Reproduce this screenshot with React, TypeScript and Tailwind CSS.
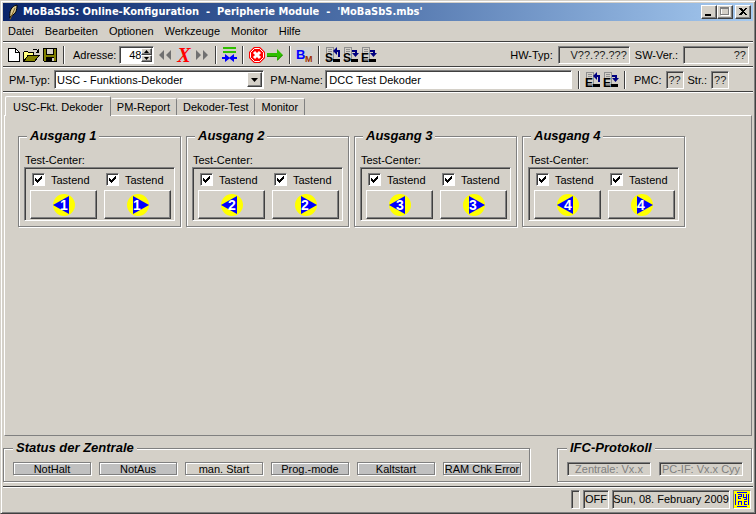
import React, { useState } from 'react';

const outputs = [1, 2, 3, 4];

const fieldInset =
  'border border-t-[#808080] border-l-[#808080] border-r-white border-b-white shadow-[inset_1px_1px_0_#404040]';
const raised =
  'border border-t-white border-l-white border-r-[#404040] border-b-[#404040] shadow-[inset_-1px_-1px_0_#808080]';

function VLine() {
  return <div className="h-[18px] w-[2px] shrink-0 border-l border-r border-l-[#404040] border-r-white" />;
}

function HLine() {
  return <div className="h-[2px] shrink-0 border-t border-b border-t-[#404040] border-b-white" />;
}

interface GroupProps {
  title: string;
  className?: string;
  children: React.ReactNode;
}

function Group({ title, className = '', children }: GroupProps) {
  return (
    <fieldset
      className={`min-w-0 border border-[#808080] shadow-[1px_1px_0_#fff,inset_1px_1px_0_#fff] ${className}`}
    >
      <legend className="bg-[#d4d0c8] px-[3px] text-[13px] leading-[16px] font-bold italic">{title}</legend>
      {children}
    </fieldset>
  );
}

// Toolbar icons
function NewIcon() {
  return (
    <svg width="12" height="14" viewBox="0 0 12 14" shapeRendering="crispEdges">
      <path d="M.5 .5h7l4 4v9h-11z" fill="#fff" stroke="#000" />
      <path d="M7.5 .5v4h4" fill="none" stroke="#000" />
    </svg>
  );
}

function OpenIcon() {
  return (
    <svg width="17" height="14" viewBox="0 0 17 14" shapeRendering="crispEdges">
      <path d="M.5 12.500v-8l1-1h3l1 1h5v3h-5z" fill="#ffff80" stroke="#000" />
      <path d="M1 13l4-5.500h11l-4 5.500z" fill="#808000" stroke="#000" />
      <path d="M9.500 2.500l1-1h3l1.500 2M15.500 1v3h-3" fill="none" stroke="#000" />
    </svg>
  );
}

function SaveIcon() {
  return (
    <svg width="14" height="14" viewBox="0 0 14 14" shapeRendering="crispEdges">
      <path d="M.5 .5h13v13h-12l-1-1z" fill="#808000" stroke="#000" />
      <path d="M3.500 .5h7v6h-7z" fill="#d4d0c8" stroke="#000" />
      <path d="M3 9h8v4h-8z" fill="#000" />
      <path d="M9 10h2v3h-2z" fill="#d4d0c8" />
    </svg>
  );
}

function DoubleArrow({ back = false }: { back?: boolean }) {
  return (
    <svg width="13" height="10" viewBox="0 0 13 10" fill="#707070">
      {back ? <path d="M5 0v10l-5-5zM12 0v10l-5-5z" /> : <path d="M1 0l5 5-5 5zM8 0l5 5-5 5z" />}
    </svg>
  );
}

function MergeIcon() {
  return (
    <svg width="15" height="15" viewBox="0 0 15 15">
      <path d="M1 0h13v2h-13zM1 4h13v2h-13z" fill="#2fbf00" shapeRendering="crispEdges" />
      <path d="M0 10h3v-3l4.500 3.500 4.500-3.500v3h3v2h-3v3l-4.500-3.500-4.500 3.500v-3h-3z" fill="#00f" />
    </svg>
  );
}

function StopIcon() {
  return (
    <svg width="16" height="16" viewBox="0 0 16 16">
      <path d="M5 0h6l5 5v6l-5 5h-6l-5-5v-6z" fill="#f00" />
      <path d="M5.500 1.500h5l4 4v5l-4 4h-5l-4-4v-5z" fill="none" stroke="#fff" />
      <path d="M5 5l6 6M11 5l-6 6" stroke="#fff" strokeWidth="3" />
    </svg>
  );
}

function GoIcon() {
  return (
    <svg width="17" height="12" viewBox="0 0 17 12">
      <path d="M0 4h10v-4l6 6-6 6v-4h-10z" fill="#2fbf00" />
      <path d="M0 7.500h10M10.500 11l5-5" stroke="#208000" />
    </svg>
  );
}

function BmIcon() {
  return (
    <svg width="17" height="18" viewBox="0 -1 17 18" className="font-['Liberation_Sans'] font-bold">
      <path d="M0 0h16v16h-16z" fill="#d0d0d0" />
      <text x="0" y="12" fill="#00f" className="text-[13px]">B</text>
      <text x="9" y="15" fill="#a03000" className="text-[9px]">M</text>
    </svg>
  );
}

function SheetIcon({ letter, up = false }: { letter: 'S' | 'E'; up?: boolean }) {
  return (
    <svg width="16" height="20" viewBox="0 -2 16 20" fill="none">
      <path d="M1.500 .5h7v12h-7z" fill="#d4d0c8" stroke="#909090" shapeRendering="crispEdges" />
      <path d="M3 2.500h4M3 4.500h4" stroke="#909090" shapeRendering="crispEdges" />
      <text x="0" y="15" fill="#000" className="font-['Liberation_Sans'] text-[12px] font-bold">
        {letter}
      </text>
      {up ? (
        <path d="M11 4h3v6" stroke="#000080" strokeWidth="2" />
      ) : (
        <path d="M9 4h4v3" stroke="#000080" strokeWidth="2" />
      )}
      {up ? <path d="M8 4l4-4v8z" fill="#000080" /> : <path d="M9 6h7l-3.500 4z" fill="#000080" />}
      <path d="M8 12h7v3h-7z" fill="#000" />
    </svg>
  );
}

function DirectionIcon({ n, back = false }: { n: number; back?: boolean }) {
  return (
    <svg width="22" height="22" viewBox="0 0 22 22">
      <circle cx="11" cy="11" r="11" fill="#ff0" />
      <path d={back ? 'M0 11l16-9v18z' : 'M22 11l-16-9v18z'} fill="#00f" />
      <text
        x={back ? 11 : 10}
        y="16"
        textAnchor="middle"
        fill="#fff"
        className="font-['Liberation_Sans'] text-[14px] font-bold"
      >
        {n}
      </text>
    </svg>
  );
}

function Key({ n, back = false }: { n: number; back?: boolean }) {
  const [checked, setChecked] = useState(true);
  return (
    <div className="flex w-[67px] flex-col gap-[3px]">
      <label className="flex h-[15px] items-center gap-[6px] pl-[2px]">
        <span className={`grid size-[13px] shrink-0 bg-white ${fieldInset}`}>
          <input
            type="checkbox"
            checked={checked}
            onChange={(e) => setChecked(e.target.checked)}
            className="peer col-start-1 row-start-1 size-[11px] appearance-none"
          />
          <svg
            viewBox="0 0 11 11"
            className="pointer-events-none invisible col-start-1 row-start-1 size-[11px] peer-checked:visible"
            shapeRendering="crispEdges"
          >
            <path d="M2 4v3l2 2 5-5v-3l-5 5z" fill="#000" />
          </svg>
        </span>
        Tastend
      </label>
      <button aria-label={`Ausgang ${n} ${back ? 'links' : 'rechts'}`} className={`flex h-[29px] items-center justify-center ${raised}`}>
        <DirectionIcon n={n} back={back} />
      </button>
    </div>
  );
}

function Output({ n }: { n: number }) {
  return (
    <Group title={`Ausgang ${n}`} className="h-[99px] w-[163px] px-[5px] [&>legend]:ml-[3px]">
      <div className="mt-[10px] pl-px leading-[13px]">Test-Center:</div>
      <div className={`flex h-[54px] gap-[7px] pt-[4px] pl-[5px] ${fieldInset}`}>
        <Key n={n} back />
        <Key n={n} />
      </div>
    </Group>
  );
}

function App() {
  const [tab, setTab] = useState(0);
  const tabs = ['USC-Fkt. Dekoder', 'PM-Report', 'Dekoder-Test', 'Monitor'];
  const states = ['NotHalt', 'NotAus', 'man. Start', 'Prog.-mode', 'Kaltstart', 'RAM Chk Error'];

  return (
    <div className="flex min-h-screen flex-col border border-t-[#d4d0c8] border-r-[#404040] border-b-[#404040] border-l-[#d4d0c8] bg-[#d4d0c8] p-[2px] font-['Liberation_Sans',sans-serif] text-[11px] leading-[14px] whitespace-nowrap text-black shadow-[inset_1px_1px_0_#fff,inset_-1px_-1px_0_#808080]">
      {/* Title bar */}
      <header className="flex h-[18px] items-center bg-linear-to-r from-[#0a246a] to-[#a6caf0] pr-[2px] pl-[5px] text-white">
        <svg width="10" height="16" viewBox="0 0 10 16">
          <path d="M2 14C1 8 3 2 9 1c0 5-1 9-6 11z" fill="#d8c890" stroke="#000" />
          <path d="M2 15.500L7 4" stroke="#806020" />
        </svg>
        <h1 className="flex-1 pl-[5px] font-['DejaVu_Sans_Condensed'] text-[11px] font-bold whitespace-pre">
          {"MoBaSbS: Online-Konfiguration  -  Peripherie Module  -  'MoBaSbS.mbs'"}
        </h1>
        <div className="flex">
          <button aria-label="Minimieren" className={`flex h-[14px] w-4 bg-[#d4d0c8] ${raised}`}>
            <svg width="14" height="12" viewBox="0 0 14 12">
              <path d="M3 8h6v2h-6z" />
            </svg>
          </button>
          <button aria-label="Maximieren" className={`flex h-[14px] w-4 bg-[#d4d0c8] ${raised}`}>
            <svg width="14" height="12" viewBox="0 0 14 12" shapeRendering="crispEdges">
              <path d="M3.500 1.500h8v8h-8zM3 2.500h9" fill="none" stroke="#fff" />
              <path d="M2.500 1.500h8v7h-8zM2 2.500h9" fill="none" stroke="#808080" />
            </svg>
          </button>
          <button aria-label="Schließen" className={`ml-[2px] flex h-[14px] w-4 bg-[#d4d0c8] ${raised}`}>
            <svg width="14" height="12" viewBox="0 0 14 12" shapeRendering="crispEdges">
              <path d="M3 2h2l2 2 2-2h2l-3 3.500 3 3.500h-2l-2-2-2 2h-2l3-3.500z" />
            </svg>
          </button>
        </div>
      </header>

      <nav className="flex h-5 items-center gap-[11px] pl-[5px]">
        {['Datei', 'Bearbeiten', 'Optionen', 'Werkzeuge', 'Monitor', 'Hilfe'].map((m) => (
          <button key={m}>{m}</button>
        ))}
      </nav>
      <HLine />

      {/* Toolbar */}
      <div className="flex h-[23px] items-center">
        <div className="flex items-center gap-[3px] pl-[5px]">
          <button aria-label="Neu"><NewIcon /></button>
          <button aria-label="Öffnen"><OpenIcon /></button>
          <button aria-label="Speichern"><SaveIcon /></button>
          <div className="pl-[3px]"><VLine /></div>
        </div>
        <label htmlFor="address" className="pr-[3px] pl-2">Adresse:</label>
        <div className={`flex h-[18px] w-[35px] bg-white p-px ${fieldInset}`}>
          <input id="address" defaultValue="48" className="w-[20px] min-w-0 text-right outline-none" />
          <div className="flex w-[11px] flex-col">
            <button aria-label="Höher" className={`flex h-[7px] items-center justify-center bg-[#d4d0c8] ${raised}`}>
              <svg width="5" height="3" viewBox="0 0 5 3"><path d="M0 3h5l-2.500-3z" /></svg>
            </button>
            <button aria-label="Tiefer" className={`flex h-[7px] items-center justify-center bg-[#d4d0c8] ${raised}`}>
              <svg width="5" height="3" viewBox="0 0 5 3"><path d="M0 0h5l-2.500 3z" /></svg>
            </button>
          </div>
        </div>
        <div className="flex items-center gap-1 pl-[5px]">
          <button aria-label="Zurück"><DoubleArrow back /></button>
          <button className="h-4 w-[15px] bg-[#d0d0d0] font-['Liberation_Serif'] text-[20px] leading-[16px] font-bold text-[#f00] italic">X</button>
          <button aria-label="Vor"><DoubleArrow /></button>
        </div>
        <div className="flex items-center gap-[5px] pl-[7px]">
          <VLine />
          <button aria-label="Abgleichen"><MergeIcon /></button>
          <VLine />
          <div className="flex items-center gap-[2px]">
            <button aria-label="Stopp"><StopIcon /></button>
            <button aria-label="Start"><GoIcon /></button>
          </div>
          <VLine />
          <button aria-label="BM"><BmIcon /></button>
          <VLine />
          <div className="flex items-center gap-[2px]">
            <button aria-label="S lesen"><SheetIcon letter="S" up /></button>
            <button aria-label="S schreiben"><SheetIcon letter="S" /></button>
            <button aria-label="E schreiben"><SheetIcon letter="E" /></button>
          </div>
        </div>
        <div className="ml-auto flex items-center gap-[5px] pr-1">
          <span>HW-Typ:</span>
          <output className={`h-[18px] w-[72px] px-[2px] text-right leading-[17px] text-[#202020] ${fieldInset}`}>V??.??.???</output>
          <span>SW-Ver.:</span>
          <output className={`h-[18px] w-[66px] px-[2px] text-right leading-[17px] text-[#202020] ${fieldInset}`}>??</output>
        </div>
      </div>
      <HLine />

      <div className="flex h-[23px] items-center">
        <label htmlFor="pm-type" className="w-[51px] pl-[6px]">PM-Typ:</label>
        <div className={`grid h-[19px] min-w-0 flex-[212_1_0] items-center bg-white ${fieldInset}`}>
          <select id="pm-type" className="col-start-1 row-start-1 w-full appearance-none pl-[2px] outline-none">
            <option>USC - Funktions-Dekoder</option>
          </select>
          <span className={`pointer-events-none col-start-1 row-start-1 mr-px flex h-[15px] w-[15px] items-center justify-center justify-self-end bg-[#d4d0c8] ${raised}`}>
            <svg width="7" height="4" viewBox="0 0 7 4"><path d="M0 0h7l-3.500 4z" /></svg>
          </span>
        </div>
        <label htmlFor="pm-name" className="w-[61px] pl-[6px]">PM-Name:</label>
        <input
          id="pm-name"
          defaultValue="DCC Test Dekoder"
          className={`h-[19px] min-w-0 flex-[246_1_0] bg-white pl-[3px] outline-none ${fieldInset}`}
        />
        <div className="flex items-center gap-[5px] pl-[6px]">
          <VLine />
          <div className="flex items-center gap-[2px]">
            <button aria-label="E lesen"><SheetIcon letter="E" up /></button>
            <button aria-label="E schreiben"><SheetIcon letter="E" /></button>
          </div>
          <VLine />
        </div>
        <div className="flex w-[127px] items-center gap-1 pl-2">
          <span>PMC:</span>
          <output className={`h-[18px] w-[18px] px-[2px] leading-[17px] text-[#202020] ${fieldInset}`}>??</output>
          <span>Str.:</span>
          <output className={`h-[18px] w-[18px] px-[2px] leading-[17px] text-[#202020] ${fieldInset}`}>??</output>
        </div>
      </div>
      <HLine />

      {/* Tabs */}
      <div role="tablist" className="flex h-[22px] items-end pt-[2px] pl-[2px]">
        {tabs.map((t, i) => (
          <button
            key={t}
            role="tab"
            aria-selected={tab === i}
            onClick={() => setTab(i)}
            className={
              tab === i
                ? 'z-10 -mb-px h-[20px] rounded-t-[2px] border-t border-r border-l border-t-white border-r-[#808080] border-l-white bg-[#d4d0c8] px-[7px]'
                : 'h-[17px] rounded-t-[2px] border-t border-r border-t-white border-r-[#808080] px-[6px]'
            }
          >
            {t}
          </button>
        ))}
      </div>
      <main className="mx-px min-h-[321px] flex-1 border border-t-white border-r-[#808080] border-b-[#808080] border-l-white pt-3 pl-[13px]">
        <div className="flex flex-wrap gap-[5px]">
          {outputs.map((n) => (
            <Output key={n} n={n} />
          ))}
        </div>
      </main>

      <div className="flex justify-between gap-[27px] pt-1 pr-px">
        <Group title="Status der Zentrale" className="h-[42px] w-[527px] pl-[9px]">
          <div className="mt-[6px] flex gap-2">
            {states.map((s) => (
              <div
                key={s}
                className={`h-[13px] w-[78px] border border-[#808080] text-center leading-[12px] shadow-[1px_1px_0_#fff,inset_1px_1px_0_#fff] ${s === 'man. Start' ? '' : 'bg-[#c0c0c0]'}`}
              >
                {s}
              </div>
            ))}
          </div>
        </Group>
        <Group title="IFC-Protokoll" className="h-[42px] w-[195px] pl-[9px]">
          <div className="mt-[6px] flex gap-2 text-[#808080]">
            <output className={`h-[14px] w-[84px] text-center leading-[13px] ${fieldInset}`}>Zentrale: Vx.x</output>
            <output className={`h-[14px] w-[84px] text-center leading-[13px] ${fieldInset}`}>PC-IF: Vx.x Cyy</output>
          </div>
        </Group>
      </div>

      <div className="h-1" />
      <HLine />
      <footer className="flex h-[23px] items-center justify-end gap-[3px] pr-[2px]">
        <span className={`h-[19px] w-[9px] ${fieldInset}`} />
        <span className={`h-[19px] w-[26px] text-center leading-[17px] ${fieldInset}`}>OFF</span>
        <span className={`h-[19px] w-[118px] text-center leading-[17px] ${fieldInset}`}>Sun, 08. February 2009</span>
        <span className="flex h-[19px] w-[18px] items-center justify-center border border-t-[#808080] border-r-white border-b-white border-l-[#808080] bg-[#ff0]">
          <svg width="14" height="15" viewBox="0 0 14 15" fill="none" stroke="#00f" shapeRendering="crispEdges">
            <path d="M.5 2v11M13.500 2v11M2 .5h10M2 14.500h10M3 2.500h3v2h-3v2h3M8.500 2v3h3v-3M11.500 5v2h-3M3.500 13v-4h3v4M12 9.500h-3v3h3" />
          </svg>
        </span>
      </footer>
    </div>
  );
}

export default App;
